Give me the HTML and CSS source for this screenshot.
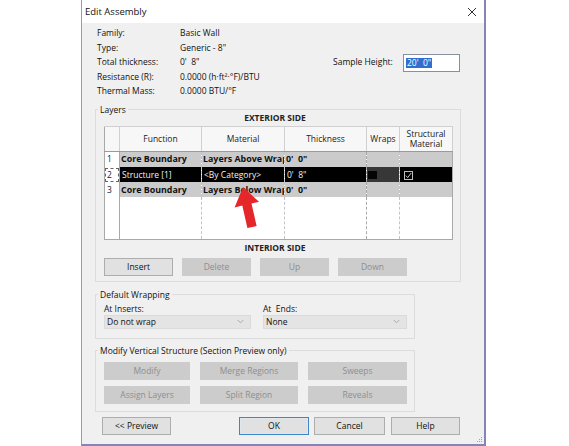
FILE: index.html
```html
<!DOCTYPE html>
<html>
<head>
<meta charset="utf-8">
<link rel="stylesheet" href="styles.css">
</head>
<body>
<div class="dialog">
  <div class="titlebar">
    <span class="title">Edit Assembly</span>
    <svg class="close" viewBox="0 0 10 10" width="10" height="10"><path d="M1 1 L9 9 M9 1 L1 9" stroke="#333" stroke-width="1" fill="none"/></svg>
  </div>
  <div class="body">
    <div class="info">
      <div class="lbl">Family:</div><div class="val">Basic Wall</div><div></div><div></div>
      <div class="lbl">Type:</div><div class="val">Generic - 8"</div><div></div><div></div>
      <div class="lbl">Total thickness:</div><div class="val">0'&nbsp; 8"</div><div class="lbl">Sample Height:</div><div class="input"><span class="sel">20'&nbsp; 0"</span></div>
      <div class="lbl">Resistance (R):</div><div class="val">0.0000 (h·ft²·°F)/BTU</div><div></div><div></div>
      <div class="lbl">Thermal Mass:</div><div class="val">0.0000 BTU/°F</div><div></div><div></div>
    </div>

    <fieldset class="group layers">
      <legend>Layers</legend>
      <div class="side">EXTERIOR SIDE</div>
      <table class="grid">
        <colgroup>
          <col class="c-num"><col class="c-fn"><col class="c-mat"><col class="c-th"><col class="c-wr"><col class="c-st">
        </colgroup>
        <thead>
          <tr>
            <th class="num"></th>
            <th>Function</th>
            <th>Material</th>
            <th>Thickness</th>
            <th class="sep">Wraps</th>
            <th class="two">Structural<br>Material</th>
          </tr>
        </thead>
        <tbody>
          <tr class="core r1">
            <td class="num">1</td>
            <td class="b">Core Boundary</td>
            <td class="b">Layers Above Wrap</td>
            <td class="b">0'&nbsp; 0"</td>
            <td class="sep"></td>
            <td></td>
          </tr>
          <tr class="selrow">
            <td class="num"><span class="focus">2</span></td>
            <td>Structure [1]</td>
            <td>&lt;By Category&gt;</td>
            <td>0'&nbsp; 8"</td>
            <td class="sep wrapcell"><span class="cb off"></span></td>
            <td><span class="cb on"><svg viewBox="0 0 9 9" width="9" height="9"><path d="M1.8 4.6 L3.7 6.6 L7.2 2" fill="none" stroke="#e0e0e0" stroke-width="0.9"/></svg></span></td>
          </tr>
          <tr class="core">
            <td class="num">3</td>
            <td class="b">Core Boundary</td>
            <td class="b">Layers Below Wrap</td>
            <td class="b">0'&nbsp; 0"</td>
            <td class="sep"></td>
            <td></td>
          </tr>
          <tr class="filler">
            <td class="num"></td>
            <td></td><td></td><td></td><td class="sep"></td><td></td>
          </tr>
        </tbody>
      </table>
      <div class="side side2">INTERIOR SIDE</div>
      <div class="btnrow">
        <div class="btn">Insert</div>
        <div class="btn dis">Delete</div>
        <div class="btn dis">Up</div>
        <div class="btn dis">Down</div>
      </div>
    </fieldset>

    <fieldset class="group wrapping">
      <legend>Default Wrapping</legend>
      <div class="wrapgrid">
        <div class="flbl">At Inserts:</div>
        <div class="flbl">At&nbsp; Ends:</div>
        <div class="select"><span>Do not wrap</span><svg class="chev" viewBox="0 0 8 5" width="7" height="5"><path d="M0.8 0.8 L4 4 L7.2 0.8" fill="none" stroke="#9a9a9a" stroke-width="0.9"/></svg></div>
        <div class="select"><span>None</span><svg class="chev" viewBox="0 0 8 5" width="7" height="5"><path d="M0.8 0.8 L4 4 L7.2 0.8" fill="none" stroke="#9a9a9a" stroke-width="0.9"/></svg></div>
      </div>
    </fieldset>

    <fieldset class="group modify">
      <legend>Modify Vertical Structure (Section Preview only)</legend>
      <div class="modgrid">
        <div class="btn dis">Modify</div>
        <div class="btn dis">Merge Regions</div>
        <div class="btn dis">Sweeps</div>
        <div class="btn dis">Assign Layers</div>
        <div class="btn dis">Split Region</div>
        <div class="btn dis">Reveals</div>
      </div>
    </fieldset>

    <div class="footer">
      <div class="btn fbtn">&lt;&lt; Preview</div>
      <div class="btn fbtn ok">OK</div>
      <div class="btn fbtn cancel">Cancel</div>
      <div class="btn fbtn help">Help</div>
    </div>
    <svg class="grip" viewBox="0 0 8 8" width="8" height="8">
      <rect x="6" y="2" width="1" height="1" fill="#a0a0a0"/>
      <rect x="4" y="4" width="1" height="1" fill="#a0a0a0"/>
      <rect x="6" y="4" width="1" height="1" fill="#a0a0a0"/>
      <rect x="2" y="6" width="1" height="1" fill="#a0a0a0"/>
      <rect x="4" y="6" width="1" height="1" fill="#a0a0a0"/>
      <rect x="6" y="6" width="1" height="1" fill="#a0a0a0"/>
    </svg>
  </div>
</div>
<svg class="arrow" width="569" height="446" viewBox="0 0 569 446">
  <polygon points="243,187 259,201.8 251.5,203.6 256.6,226 247.4,228 242.3,205.6 234.6,207.6" fill="#e5262b"/>
</svg>
</body>
</html>
```

FILE: styles.css
```css
* { box-sizing: border-box; }
html, body {
  margin: 0;
  padding: 0;
  background: #ffffff;
}
body {
  position: relative;
  width: 569px;
  height: 446px;
  overflow: hidden;
  font-family: "Open Sans", "Noto Sans", sans-serif;
  font-size: 8.5px;
  color: #111;
}
.dialog {
  margin-left: 81px;
  width: 405px;
  height: 446px;
  border-left: 1px solid #9c9c9c;
  border-right: 2px solid #8484bb;
  border-bottom: 2px solid #8484bb;
  display: flex;
  flex-direction: column;
}
.titlebar {
  height: 23px;
  background: #fff;
  display: flex;
  align-items: center;
  justify-content: space-between;
  padding: 0 7px 0 3px;
  flex: none;
}
.title {
  font-size: 9.5px;
  color: #111;
}
.close {
  display: block;
}
.body {
  position: relative;
  flex: 1;
  background: #f0f0f0;
  padding: 3px 0 0 0;
}
.info {
  display: grid;
  grid-template-columns: 83px 153px 70px 57px;
  grid-auto-rows: 14.5px;
  padding-left: 15px;
  align-items: center;
  line-height: 12px;
}
.input {
  height: 18px;
  margin-top: 1px;
  background: #fff;
  border: 1px solid #8a8fa0;
  padding: 2px 0 0 2px;
  line-height: 11px;
}
.sel {
  display: inline-block;
  background: #2f6fd0;
  color: #fff;
  padding: 0 1px;
  line-height: 10px;
}

.group {
  margin: 0 0 0 13px;
  padding: 0;
  border: 1px solid #dcdcdc;
  min-width: 0;
}
.group legend {
  margin-left: 2px;
  padding: 0 2px;
  line-height: 12px;
}
.layers {
  margin-top: 5px;
  width: 366px;
  padding-bottom: 5px;
}
.side {
  text-align: center;
  font-weight: 700;
  line-height: 10px;
  margin-top: -3px;
  padding-right: 6px;
  color: #222;
}
.side2 { margin-top: 3px; }

.grid {
  margin: 3px 0 0 8px;
  border-collapse: collapse;
  table-layout: fixed;
  width: 348px;
  border: 1px solid #a8a8a8;
  background: #fff;
}
.c-num { width: 15px; }
.c-fn { width: 82px; }
.c-mat { width: 83px; }
.c-th { width: 82px; }
.c-wr { width: 33px; }
.c-st { width: 53px; }
.grid th {
  height: 25px;
  font-weight: 400;
  background: #f7f7f7;
  border: 1px solid #d0d0d0;
  border-bottom: 1px solid #9a9a9a;
  padding: 0;
  line-height: 10px;
  color: #222;
  text-align: center;
}
.grid th.num { background: #f7f7f7; border-left: none; }
.grid th.sep { border-left: 1px solid #9a9a9a; }
.grid td {
  padding: 0 0 0 2px;
  white-space: nowrap;
  overflow: hidden;
  text-overflow: clip;
  border-left: 1px dashed #c4c4c4;
  line-height: 10px;
}
.grid td.num {
  background: #fff;
  border-left: none;
  border-right: 1px solid #a8a8a8;
  padding-left: 2px;
  color: #222;
}
.grid td.sep { border-left: 1px dashed #a8a8a8; }
.grid tr.core td { background: #cbcbcb; height: 15px; }
.grid tr.core.r1 td { height: 16px; }
.grid tr.core td.num { background: #fff; }
.grid td.b { font-weight: 700; color: #111; font-size: 8.9px; padding-left: 1px; }
.grid tr.selrow td { background: #000; color: #f2f2f2; height: 15px; }
.grid tr.selrow td.num { background: #fff; color: #222; padding-left: 0; }
.focus {
  display: block;
  border: 1px dashed #666;
  height: 14px;
  line-height: 12px;
  padding-left: 1px;
}
.grid tr.selrow td.wrapcell {
  background: #373737;
  padding-left: 1px;
}
.cb {
  display: inline-block;
  width: 9px;
  height: 8px;
  vertical-align: middle;
}
.cb.off { background: #050505; }
.cb.on {
  border: 1px solid #bdbdbd;
  width: 9px;
  height: 9px;
  margin-left: 2px;
}
.cb.on svg { display: block; margin: -1px 0 0 -1px; }
.grid tr.filler td { height: 42px; background: #fff; }

.btnrow {
  display: flex;
  gap: 9px;
  margin: 5px 0 0 8px;
}
.btn {
  height: 18px;
  border: 1px solid #adadad;
  background: #e1e1e1;
  display: flex;
  align-items: center;
  justify-content: center;
  color: #111;
  flex: none;
}
.btnrow .btn { width: 69px; }
.btn.dis {
  background: #cccccc;
  border-color: #cccccc;
  color: #8e8e8e;
}

.wrapping {
  margin-top: 7px;
  width: 320px;
  padding-bottom: 9px;
}
.wrapgrid {
  display: grid;
  grid-template-columns: 147px 144px;
  column-gap: 12px;
  margin: 2px 0 0 8px;
}
.flbl {
  line-height: 12px;
  color: #111;
}
.select {
  height: 14px;
  background: #e4e4e4;
  border: 1px solid #dadada;
  display: flex;
  align-items: center;
  justify-content: space-between;
  padding: 0 6px 0 2px;
  line-height: 10px;
}
.chev { display: block; }

.modify {
  margin-top: 6px;
  width: 320px;
  padding-bottom: 7px;
}
.modgrid {
  display: grid;
  grid-template-columns: 86px 98px 99px;
  column-gap: 10px;
  row-gap: 6px;
  margin: 5px 0 0 8px;
}

.footer {
  display: flex;
  margin: 5px 0 0 20px;
}
.fbtn { width: 69px; }
.ok {
  margin-left: 68px;
  width: 70px;
  border: 1px solid #3f86c8;
  box-shadow: inset 0 0 0 1px #dfe8f0;
}
.cancel { margin-left: 5px; width: 71px; }
.help { margin-left: 6px; }
.grip {
  position: absolute;
  right: 1px;
  bottom: 1px;
}
.arrow {
  position: absolute;
  left: 0;
  top: 0;
  pointer-events: none;
}
```
